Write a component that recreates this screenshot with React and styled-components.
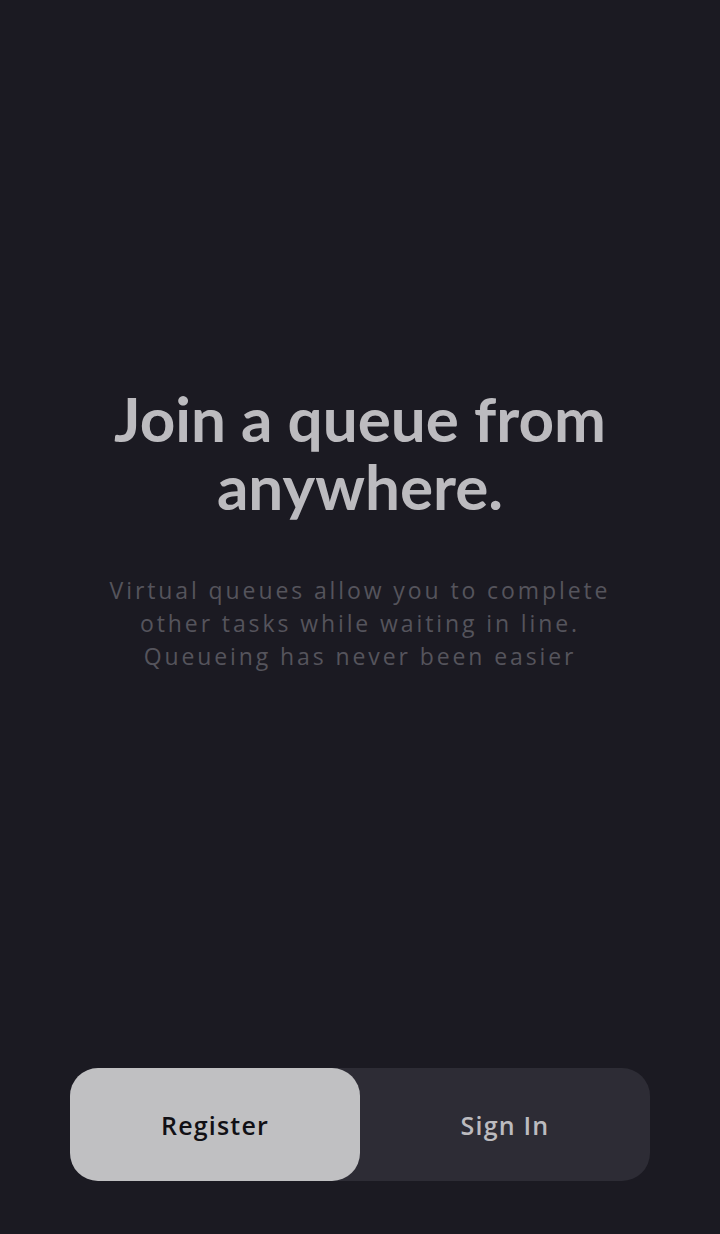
import styled, { createGlobalStyle } from 'styled-components';

const GlobalStyle = createGlobalStyle`
  html, body {
    margin: 0;
    padding: 0;
    background: #1b1a22;
  }
  #root {
    min-height: 100vh;
  }
`;

const App = () => {
  return (
    <>
      <GlobalStyle />
      <Page>
        <Intro>
          <Title>Join a queue from anywhere.</Title>
          <Blurb>
            Virtual queues allow you to complete other tasks while waiting in
            line. Queueing has never been easier
          </Blurb>
        </Intro>
        <AuthSwitch>
          <SwitchButton active>Register</SwitchButton>
          <SwitchButton>Sign In</SwitchButton>
        </AuthSwitch>
      </Page>
    </>
  );
};

const Page = styled.div`
  display: flex;
  flex-direction: column;
  min-height: 100vh;
  background: #1b1a22;
  padding: 0 70px 53px;
  box-sizing: border-box;
`;

const Intro = styled.div`
  flex: 1;
  display: flex;
  flex-direction: column;
  align-items: center;
  justify-content: center;
  text-align: center;
  padding-bottom: 11px;
`;

const Title = styled.h1`
  margin: 0 0 54px;
  width: 540px;
  font-family: 'Lato', 'Noto Sans', sans-serif;
  font-weight: 700;
  font-size: 62px;
  line-height: 68px;
  color: #bcbbbf;
`;

const Blurb = styled.p`
  margin: 0;
  width: 540px;
  font-family: 'Open Sans', 'Noto Sans', sans-serif;
  font-size: 23px;
  line-height: 33px;
  letter-spacing: 2.9px;
  color: #55545c;
`;

const AuthSwitch = styled.div`
  display: flex;
  height: 113px;
  border-radius: 28px;
  background: #2d2c35;
`;

const SwitchButton = styled.button`
  flex: 1;
  border: none;
  border-radius: 28px;
  background: ${({ active }) => (active ? '#c0c0c2' : 'transparent')};
  color: ${({ active }) => (active ? '#111015' : '#bcbbbf')};
  font-family: 'Open Sans', 'Noto Sans', sans-serif;
  font-weight: 600;
  font-size: 25px;
  letter-spacing: 1.2px;
  cursor: pointer;
`;

export default App;
